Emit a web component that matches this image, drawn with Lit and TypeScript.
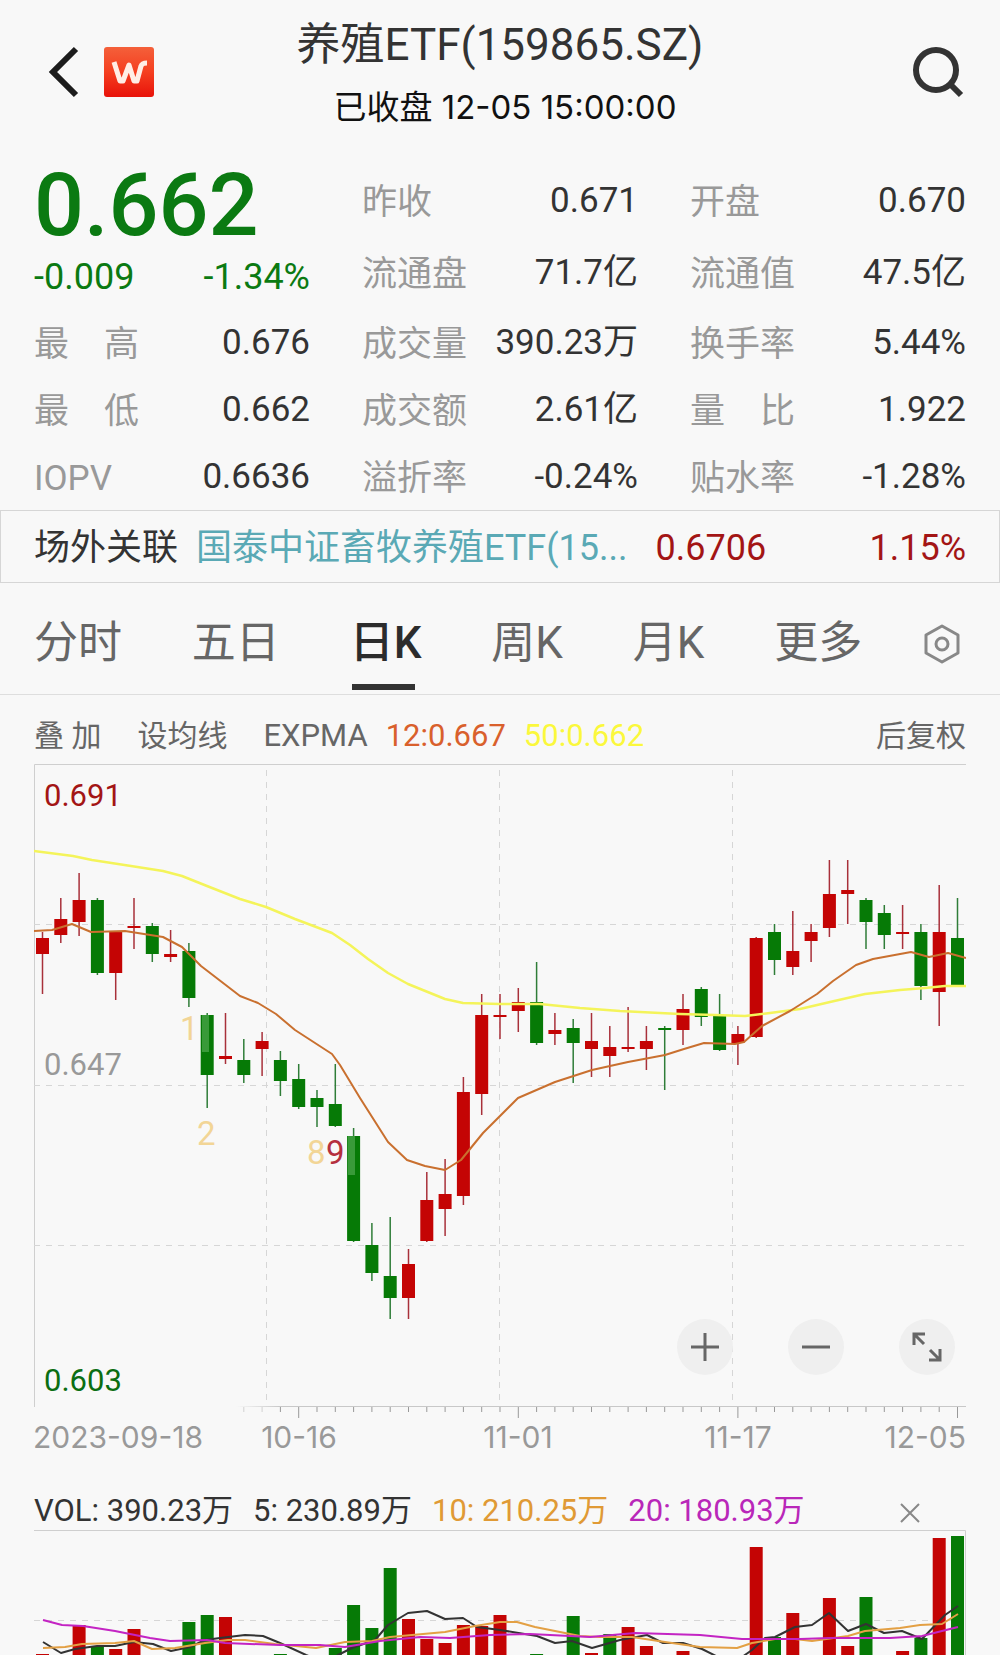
import { LitElement, html, svg, css } from "lit";
import { customElement } from "lit/decorators.js";

type Tone = "up" | "down";

const STATS: [string, string][][] = [
  [["昨收", "0.671"], ["开盘", "0.670"]],
  [["流通盘", "71.7亿"], ["流通值", "47.5亿"]],
  [["最　高", "0.676"], ["成交量", "390.23万"], ["换手率", "5.44%"]],
  [["最　低", "0.662"], ["成交额", "2.61亿"], ["量　比", "1.922"]],
  [["IOPV", "0.6636"], ["溢折率", "-0.24%"], ["贴水率", "-1.28%"]],
];

const TABS = ["分时", "五日", "日K", "周K", "月K", "更多"];

// One entry per trading day: tone, high, low, body top, body bottom.
const CANDLES: [0 | 1, number, number, number, number][] = [
  [1, 932, 994, 938, 954], [1, 898, 943, 919, 935], [1, 873, 936, 900, 922],
  [0, 898, 975, 900, 973], [1, 931, 1000, 932, 973], [1, 898, 949, 926, 928],
  [0, 923, 962, 926, 954], [1, 930, 962, 954, 957], [0, 943, 1007, 951, 998],
  [0, 1013, 1108, 1015, 1075], [1, 1013, 1064, 1056, 1059], [0, 1039, 1083, 1060, 1075],
  [1, 1032, 1076, 1041, 1049], [0, 1051, 1096, 1060, 1081], [0, 1064, 1109, 1079, 1107],
  [0, 1090, 1127, 1098, 1107], [0, 1064, 1127, 1104, 1126], [0, 1128, 1242, 1136, 1241],
  [0, 1223, 1281, 1245, 1273], [0, 1217, 1319, 1276, 1298], [1, 1249, 1319, 1264, 1298],
  [1, 1172, 1242, 1200, 1241], [1, 1159, 1236, 1194, 1209], [1, 1077, 1205, 1092, 1196],
  [1, 994, 1115, 1015, 1094], [1, 994, 1039, 1015, 1017], [1, 988, 1032, 1002, 1011],
  [0, 962, 1045, 1002, 1043], [1, 1013, 1045, 1030, 1034], [0, 1019, 1083, 1028, 1043],
  [1, 1013, 1077, 1041, 1049], [1, 1026, 1077, 1047, 1056], [1, 1007, 1052, 1047, 1049],
  [1, 1026, 1070, 1041, 1049], [0, 1026, 1090, 1028, 1030], [1, 994, 1045, 1009, 1030],
  [0, 987, 1026, 989, 1017], [0, 994, 1051, 1015, 1050], [1, 1026, 1065, 1034, 1043],
  [1, 937, 1038, 938, 1037], [0, 924, 975, 932, 960], [1, 911, 975, 951, 967],
  [1, 924, 962, 932, 941], [1, 860, 937, 894, 928], [1, 860, 924, 890, 894],
  [0, 898, 949, 900, 922], [0, 905, 949, 913, 935], [1, 905, 949, 932, 934],
  [0, 924, 1000, 932, 986], [1, 885, 1026, 932, 992], [0, 898, 986, 938, 986],
];

// Day index, tone, top of the bar.
const VOLUMES: [number, 0 | 1, number][] = [
  [0, 1, 1654], [2, 1, 1625], [3, 0, 1646], [4, 1, 1649], [5, 1, 1629], [8, 0, 1622],
  [9, 0, 1615], [10, 1, 1617], [13, 0, 1654], [16, 0, 1648], [17, 0, 1605],
  [18, 0, 1628], [19, 0, 1568], [20, 1, 1619], [21, 1, 1639], [22, 1, 1643],
  [23, 1, 1625], [24, 1, 1626], [25, 1, 1615], [27, 0, 1654], [29, 0, 1616],
  [30, 1, 1653], [31, 0, 1634], [32, 1, 1627], [33, 1, 1646], [35, 1, 1651],
  [39, 1, 1547], [40, 0, 1637], [41, 1, 1613], [43, 1, 1598], [44, 1, 1646],
  [45, 0, 1597], [47, 1, 1651], [48, 0, 1638], [49, 1, 1538], [50, 0, 1536],
];

const EMA50 =
  "34,851 73,856 92,860 131,866 163,871 182,876 207,886 240,899 266,907 295,919 332,933 350,945 368,959 388,973 408,984 445,999 463,1003 500,1004 540,1004 580,1008 620,1011 680,1014 715,1015 745,1016 770,1013 800,1009 830,1002 865,994 900,990 925,988 945,986 966,986";
const EMA12 =
  "34,931 52,930 72,924 91,932 125,931 163,937 182,947 201,966 240,996 258,1003 276,1014 295,1030 332,1054 340,1065 360,1098 388,1142 407,1160 425,1166 445,1170 461,1160 483,1133 518,1098 555,1082 592,1070 628,1062 665,1055 684,1049 704,1043 735,1044 744,1042 762,1026 790,1011 817,994 833,981 856,965 873,959 911,952 929,957 948,953 966,958";
const VOL5 =
  "43,1642 61,1653 75,1649 97,1646 115,1646 134,1642 153,1644 171,1651 190,1647 205,1640 220,1638 245,1635 263,1636 280,1643 306,1655 325,1662 340,1654 352,1648 375,1640 388,1625 408,1613 427,1611 445,1619 463,1618 477,1627 500,1630 537,1636 555,1643 572,1641 592,1648 620,1640 647,1635 663,1643 683,1643 702,1649 720,1658 735,1662 752,1650 765,1638 775,1637 795,1627 812,1625 829,1613 848,1631 866,1624 884,1633 902,1631 922,1639 945,1615 958,1606";
const VOL10 =
  "43,1648 65,1647 82,1644 115,1643 134,1641 152,1649 175,1648 205,1643 228,1640 245,1640 275,1644 316,1648 345,1642 372,1641 390,1637 412,1635 445,1632 475,1626 500,1622 517,1622 535,1627 580,1636 600,1637 632,1637 665,1642 700,1647 737,1648 752,1643 775,1639 795,1639 812,1641 848,1636 865,1631 900,1628 920,1625 942,1624 958,1614";
const VOL20 =
  "43,1620 62,1625 83,1626 115,1631 150,1638 170,1641 207,1640 225,1643 280,1645 320,1645 345,1647 380,1641 420,1637 450,1638 490,1635 530,1634 590,1637 635,1633 700,1635 742,1639 800,1639 830,1638 890,1638 922,1636 958,1627";

const STEP = 18.3;
const dayX = (i: number) => 42.5 + STEP * i;
const tone = (t: 0 | 1): Tone => (t ? "up" : "down");

@customElement("app-root")
export class AppRoot extends LitElement {
  static styles = css`
    :host {
      display: block;
      background: #f8f8f8;
      color: #333;
      font-family: Roboto, "Noto Sans CJK SC", sans-serif;
      line-height: 1.2;
      overflow: hidden;
    }
    * { box-sizing: border-box; }
    button {
      appearance: none;
      border: 0;
      padding: 0;
      margin: 0;
      background: none;
      font: inherit;
      color: inherit;
      cursor: pointer;
    }
    svg { display: block; }
    .top {
      display: grid;
      grid-template-columns: 1fr auto 1fr;
      align-items: center;
      height: 144px;
      padding: 0 36px;
    }
    .left { display: flex; align-items: center; gap: 20px; padding-left: 12px; }
    .right { display: flex; justify-content: flex-end; }
    .heading { text-align: center; padding-top: 6px; }
    .title { margin: 0; font-size: 44px; line-height: 64px; font-weight: 400; }
    .status {
      margin: 0;
      padding-left: 10px;
      font-family: Inter, "Noto Sans CJK SC", sans-serif;
      font-size: 33px;
      line-height: 60px;
      color: #111;
    }
    .quote {
      display: grid;
      grid-template-columns: repeat(3, 1fr);
      grid-template-rows: 72px 72px 67px 67px 67px;
      column-gap: 52px;
      padding: 19px 34px 2px;
      margin: 0;
    }
    .last { grid-row: 1 / 3; color: #0b7a12; font-weight: 500; }
    .price { margin: 0; font-size: 88px; line-height: 84px; }
    .change {
      display: flex;
      justify-content: space-between;
      margin: 0;
      font-size: 36px;
      line-height: 60px;
      font-weight: 400;
    }
    .stat {
      display: flex;
      justify-content: space-between;
      align-items: center;
      padding-top: 4px;
      font-size: 35px;
      white-space: nowrap;
    }
    .stat dt { color: #999; padding-top: 4px; }
    .stat dd { margin: 0; }
    .related {
      display: flex;
      align-items: center;
      height: 73px;
      padding: 5px 33px 0;
      border: 1px solid #d6d6d6;
      font-size: 36px;
      white-space: nowrap;
    }
    .fund {
      margin-left: 18px;
      margin-right: 28px;
      color: #5aa9b5;
      text-decoration: none;
    }
    .red { color: #a31515; }
    .push { margin-left: auto; }
    .tabs {
      display: flex;
      justify-content: space-between;
      align-items: stretch;
      height: 112px;
      padding: 10px 40px 0 34px;
      border-bottom: 1px solid #dedede;
      font-size: 44px;
      color: #666;
    }
    .tab { position: relative; }
    .tab.on { color: #2c2c2c; font-weight: 500; }
    .tab.on::after {
      content: "";
      position: absolute;
      left: 2px;
      right: 6px;
      bottom: 4px;
      height: 6px;
      background: #333;
    }
    .settings { margin-left: -8px; }
    .legend {
      display: flex;
      align-items: center;
      height: 69px;
      padding: 12px 34px 0;
      font-size: 30px;
      color: #666;
      white-space: nowrap;
    }
    .gap-l { margin-left: 36px; }
    .gap-s { margin-left: 18px; }
    .num { font-size: 31px; }
    .e12 { color: #d9602c; }
    .e50 { color: #fbf83c; }
    .chart { position: relative; padding: 0 34px; }
    .chart svg.plot, .volume svg.plot { width: 100%; height: auto; }
    .tools {
      position: absolute;
      right: 45px;
      top: 555px;
      display: flex;
      gap: 55px;
    }
    .tool {
      width: 56px;
      height: 56px;
      border-radius: 50%;
      background: #efefef;
      display: grid;
      place-items: center;
    }
    .frame { stroke: #cfcfcf; fill: none; }
    .grid { stroke: #d6d6d6; fill: none; stroke-dasharray: 6 6; }
    .tick { stroke: #999; }
    .up { fill: #c40404; stroke: none; }
    .down { fill: #067a06; stroke: none; }
    .wick-up { stroke: #a8303a; }
    .wick-down { stroke: #2f7d38; }
    .glow { fill: #399a39; }
    .line { fill: none; stroke-width: 2; stroke-linejoin: round; }
    .l-e12 { stroke: #c9702f; }
    .l-e50 { stroke: #f4f45a; stroke-width: 2.5; }
    .l5 { stroke: #333; }
    .l10 { stroke: #e3a044; }
    .l20 { stroke: #c324c3; }
    .hi { fill: #a31515; }
    .mid { fill: #999; }
    .lo { fill: #0b6e12; }
    .level { font-size: 31px; }
    .axis { font-family: Inter, sans-serif; font-size: 30px; }
    .mark { font-size: 33px; fill: #f2d596; }
    .mark.end { fill: #b5303e; }
    .vol {
      display: flex;
      align-items: center;
      gap: 20px;
      height: 50px;
      margin-top: 16px;
      padding: 12px 34px 0;
      font-size: 31px;
      white-space: nowrap;
    }
    .v10 { color: #e09a35; }
    .v20 { color: #b927b9; }
    .close { margin-left: auto; margin-right: 46px; padding-top: 4px; }
    .volume { padding: 0 34px; }
  `;

  private stat([label, value]: [string, string]) {
    return html`<div class="stat"><dt>${label}</dt><dd>${value}</dd></div>`;
  }

  private candle([t, high, low, top, bottom]: (typeof CANDLES)[number], i: number) {
    const x = dayX(i);
    return svg`
      <line class="wick-${tone(t)}" stroke-width="1.5" x1=${x} x2=${x} y1=${high} y2=${low}></line>
      <rect class=${tone(t)} x=${x - 6.5} y=${top} width="13" height=${bottom - top}></rect>`;
  }

  private tick(i: number) {
    const major = (i - 14) % 12 === 0;
    return svg`<line class="tick" opacity=${i < 13 ? 0.4 : 1} x1=${dayX(i)} x2=${dayX(i)} y1="1407" y2=${major ? 1418 : 1412}></line>`;
  }

  render() {
    const ticks = Array.from({ length: 40 }, (_, k) => k + 11);
    return html`
      <header class="top">
        <div class="left">
          <button aria-label="返回">
            <svg width="36" height="52" viewBox="0 0 36 52" fill="none" stroke="#1c1c1c" stroke-width="6">
              <path d="M28 3 L5 26 L28 49"></path>
            </svg>
          </button>
          <svg width="50" height="50" viewBox="0 0 50 50" role="img" aria-label="W">
            <defs>
              <linearGradient id="logo" x1="0" y1="0" x2="0" y2="1">
                <stop offset="0" stop-color="#f4603a"></stop>
                <stop offset="0.5" stop-color="#f53f20"></stop>
                <stop offset="1" stop-color="#e8130a"></stop>
              </linearGradient>
            </defs>
            <rect width="50" height="50" rx="3" fill="url(#logo)"></rect>
            <path d="M10 15 L16 34 L19 34 L25 18 L30 34 L33 34 L37 19 Q38 16 43 16" fill="none" stroke="#ffeee6" stroke-width="5" stroke-linejoin="round"></path>
          </svg>
        </div>
        <div class="heading">
          <h1 class="title">养殖ETF(159865.SZ)</h1>
          <p class="status">已收盘 12-05 15:00:00</p>
        </div>
        <div class="right">
          <button aria-label="搜索">
            <svg width="52" height="54" viewBox="0 0 52 54" fill="none" stroke="#333" stroke-width="6">
              <circle cx="24" cy="25" r="20"></circle>
              <path d="M38 39 L49 50"></path>
            </svg>
          </button>
        </div>
      </header>

      <dl class="quote">
        <div class="last">
          <dd class="price">0.662</dd>
          <dd class="change"><span>-0.009</span><span>-1.34%</span></dd>
        </div>
        ${STATS.flat().map((s) => this.stat(s))}
      </dl>

      <section class="related">
        <span>场外关联</span>
        <a class="fund" href="#fund">国泰中证畜牧养殖ETF(15...</a>
        <span class="red">0.6706</span>
        <span class="red push">1.15%</span>
      </section>

      <nav class="tabs">
        ${TABS.map((t) => html`<button class="tab ${t === "日K" ? "on" : ""}">${t}</button>`)}
        <button class="settings" aria-label="设置">
          <svg width="36" height="40" viewBox="0 0 36 40" fill="none" stroke="#888" stroke-width="3" stroke-linejoin="round">
            <path d="M18 2 L34 11 V29 L18 38 L2 29 V11 Z"></path>
            <circle cx="18" cy="20" r="6"></circle>
          </svg>
        </button>
      </nav>

      <div class="legend">
        <button>叠 加</button>
        <button class="gap-l">设均线</button>
        <span class="gap-l num">EXPMA</span>
        <span class="gap-s num e12">12:0.667</span>
        <span class="gap-s num e50">50:0.662</span>
        <button class="push">后复权</button>
      </div>

      <section class="chart">
        <svg class="plot" viewBox="34 764 932 700" role="img" aria-label="日K">
          <defs>
            <linearGradient id="fade" gradientUnits="userSpaceOnUse" x1="236" y1="0" x2="280" y2="0">
              <stop offset="0" stop-color="#c8c8c8" stop-opacity="0"></stop>
              <stop offset="1" stop-color="#c8c8c8"></stop>
            </linearGradient>
          </defs>
          <path class="frame" d="M34.5 1407 V764.5 H966"></path>
          <rect x="236" y="1406" width="730" height="1" fill="url(#fade)"></rect>
          ${[924.5, 1085.5, 1245.5].map((y) => svg`<path class="grid" d="M34 ${y} H966"></path>`)}
          ${[266.5, 499.5, 732.5].map((x) => svg`<path class="grid" d="M${x} 770 V1406"></path>`)}
          ${ticks.map((i) => this.tick(i))}
          ${CANDLES.map((c, i) => this.candle(c, i))}
          <rect class="glow" x="202" y="1015" width="7" height="37"></rect>
          <rect class="glow" x="348" y="1136" width="7" height="39"></rect>
          <polyline class="line l-e50" points=${EMA50}></polyline>
          <polyline class="line l-e12" points=${EMA12}></polyline>
          <g class="level">
            <text class="hi" x="44" y="806">0.691</text>
            <text class="mid" x="44" y="1075">0.647</text>
            <text class="lo" x="44" y="1391">0.603</text>
          </g>
          <g class="axis">
            <text class="mid" x="33" y="1448">2023-09-18</text>
            <text class="mid" x="299" y="1448" text-anchor="middle">10-16</text>
            <text class="mid" x="518" y="1448" text-anchor="middle">11-01</text>
            <text class="mid" x="738" y="1448" text-anchor="middle">11-17</text>
            <text class="mid" x="966" y="1448" text-anchor="end">12-05</text>
          </g>
          <text class="mark" x="180" y="1040">1</text>
          <text class="mark" x="197" y="1145">2</text>
          <text class="mark" x="307" y="1164">8</text>
          <text class="mark end" x="326" y="1164">9</text>
        </svg>
        <div class="tools">
          <button class="tool" aria-label="放大">
            <svg width="30" height="30" stroke="#666" stroke-width="3"><path d="M15 1 V29 M1 15 H29"></path></svg>
          </button>
          <button class="tool" aria-label="缩小">
            <svg width="30" height="30" stroke="#666" stroke-width="3"><path d="M1 15 H29"></path></svg>
          </button>
          <button class="tool" aria-label="全屏">
            <svg width="30" height="30" fill="none" stroke="#666" stroke-width="3">
              <path d="M2 13 V2 H13 M2 2 L12 12 M28 17 V28 H17 M28 28 L18 18"></path>
            </svg>
          </button>
        </div>
      </section>

      <div class="vol">
        <span>VOL: 390.23万</span>
        <span>5: 230.89万</span>
        <span class="v10">10: 210.25万</span>
        <span class="v20">20: 180.93万</span>
        <button class="close" aria-label="关闭">
          <svg width="20" height="20" stroke="#888" stroke-width="2"><path d="M1 1 L19 19 M19 1 L1 19"></path></svg>
        </button>
      </div>

      <section class="volume">
        <svg class="plot" viewBox="34 1530 932 125" role="img" aria-label="VOL">
          <path class="frame" d="M34 1530.5 H965.5 V1655"></path>
          <path class="grid" d="M34 1620.5 H966"></path>
          ${VOLUMES.map(([i, t, top]) => svg`<rect class=${tone(t)} x=${dayX(i) - 6.5} y=${top} width="13" height=${1655 - top}></rect>`)}
          <polyline class="line l5" points=${VOL5}></polyline>
          <polyline class="line l10" points=${VOL10}></polyline>
          <polyline class="line l20" points=${VOL20}></polyline>
        </svg>
      </section>
    `;
  }
}
